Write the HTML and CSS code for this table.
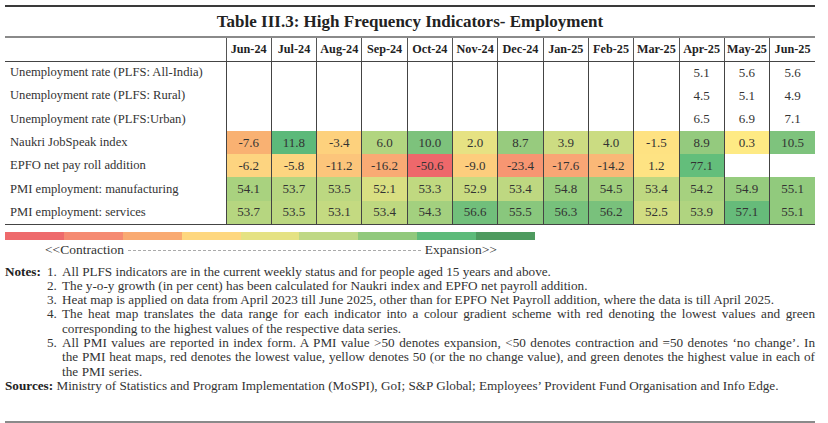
FILE: index.html
```html
<!DOCTYPE html>
<html lang="en">
<head>
<meta charset="utf-8">
<title>Table III.3: High Frequency Indicators- Employment</title>
<link rel="stylesheet" href="styles.css">
</head>
<body>
<div class="page">
  <div class="rule rule-top"></div>
  <h1 class="title">Table III.3: High Frequency Indicators- Employment</h1>
  <table class="hf">
    <colgroup>
      <col class="c-label">
      <col class="c-m"><col class="c-m"><col class="c-m"><col class="c-m"><col class="c-m"><col class="c-m"><col class="c-m"><col class="c-m"><col class="c-m"><col class="c-m"><col class="c-m"><col class="c-m"><col class="c-m">
    </colgroup>
    <thead>
      <tr><th></th><th>Jun-24</th><th>Jul-24</th><th>Aug-24</th><th>Sep-24</th><th>Oct-24</th><th>Nov-24</th><th>Dec-24</th><th>Jan-25</th><th>Feb-25</th><th>Mar-25</th><th>Apr-25</th><th>May-25</th><th>Jun-25</th></tr>
    </thead>
    <tbody>
      <tr><td>Unemployment rate (PLFS: All-India)</td><td></td><td></td><td></td><td></td><td></td><td></td><td></td><td></td><td></td><td></td><td>5.1</td><td>5.6</td><td>5.6</td></tr>
      <tr><td>Unemployment rate (PLFS: Rural)</td><td></td><td></td><td></td><td></td><td></td><td></td><td></td><td></td><td></td><td></td><td>4.5</td><td>5.1</td><td>4.9</td></tr>
      <tr><td>Unemployment rate (PLFS:Urban)</td><td></td><td></td><td></td><td></td><td></td><td></td><td></td><td></td><td></td><td></td><td>6.5</td><td>6.9</td><td>7.1</td></tr>
      <tr><td>Naukri JobSpeak index</td>
        <td style="background:#f9b172">-7.6</td><td style="background:#5cb97a">11.8</td><td style="background:#fdd17d">-3.4</td><td style="background:#b2d580">6.0</td><td style="background:#7dc27c">10.0</td><td style="background:#e6e283">2.0</td><td style="background:#97cb7e">8.7</td><td style="background:#cddc82">3.9</td><td style="background:#cbdc82">4.0</td><td style="background:#fee282">-1.5</td><td style="background:#94ca7e">8.9</td><td style="background:#feea84">0.3</td><td style="background:#7ec37d">10.5</td></tr>
      <tr><td>EPFO net pay roll addition</td>
        <td style="background:#fdd480">-6.2</td><td style="background:#fdd580">-5.8</td><td style="background:#fcc57b">-11.2</td><td style="background:#f9aa74">-16.2</td><td style="background:#ee686b">-50.6</td><td style="background:#fdcd7d">-9.0</td><td style="background:#f79672">-23.4</td><td style="background:#f9a675">-17.6</td><td style="background:#fab877">-14.2</td><td style="background:#fee383">1.2</td><td style="background:#63be7b">77.1</td><td></td><td></td></tr>
      <tr><td>PMI employment: manufacturing</td>
        <td style="background:#a9d27f">54.1</td><td style="background:#b6d680">53.7</td><td style="background:#bcd881">53.5</td><td style="background:#d9df82">52.1</td><td style="background:#c0d980">53.3</td><td style="background:#c9db81">52.9</td><td style="background:#bed881">53.4</td><td style="background:#99cd7e">54.8</td><td style="background:#a0cf7e">54.5</td><td style="background:#bed881">53.4</td><td style="background:#a6d17f">54.2</td><td style="background:#96cc7e">54.9</td><td style="background:#91ca7d">55.1</td></tr>
      <tr><td>PMI employment: services</td>
        <td style="background:#b6d680">53.7</td><td style="background:#bbd780">53.5</td><td style="background:#c4da81">53.1</td><td style="background:#bed880">53.4</td><td style="background:#a3d07f">54.3</td><td style="background:#71bf7b">56.6</td><td style="background:#89c77d">55.5</td><td style="background:#77c17c">56.3</td><td style="background:#79c17c">56.2</td><td style="background:#d1dd82">52.5</td><td style="background:#b0d480">53.9</td><td style="background:#66bb7a">57.1</td><td style="background:#91ca7d">55.1</td></tr>
    </tbody>
  </table>

  <div class="legend-bar">
    <span class="seg s1"></span><span class="seg s2"></span><span class="seg s3"></span><span class="seg s4"></span><span class="seg s5"></span><span class="seg s6"></span><span class="seg s7"></span><span class="seg s8"></span><span class="seg s9"></span>
  </div>
  <div class="legend-text">
    <span>&lt;&lt;Contraction</span><span class="dash"></span><span>Expansion&gt;&gt;</span>
  </div>

  <div class="notes">
    <div class="notes-label">Notes:</div>
    <ol class="notes-list">
      <li><span class="num">1.</span><span class="txt">All PLFS indicators are in the current weekly status and for people aged 15 years and above.</span></li>
      <li><span class="num">2.</span><span class="txt">The y-o-y growth (in per cent) has been calculated for Naukri index and EPFO net payroll addition.</span></li>
      <li><span class="num">3.</span><span class="txt">Heat map is applied on data from April 2023 till June 2025, other than for EPFO Net Payroll addition, where the data is till April 2025.</span></li>
      <li><span class="num">4.</span><span class="txt just">The heat map translates the data range for each indicator into a colour gradient scheme with red denoting the lowest values and green corresponding to the highest values of the respective data series.</span></li>
      <li><span class="num">5.</span><span class="txt just tight">All PMI values are reported in index form. A PMI value &gt;50 denotes expansion, &lt;50 denotes contraction and =50 denotes ‘no change’. In the PMI heat maps, red denotes the lowest value, yellow denotes 50 (or the no change value), and green denotes the highest value in each of the PMI series.</span></li>
    </ol>
  </div>
  <p class="sources"><span class="src-label">Sources:</span> Ministry of Statistics and Program Implementation (MoSPI), GoI; S&amp;P Global; Employees’ Provident Fund Organisation and Info Edge.</p>
  <div class="rule rule-bottom"></div>
</div>
</body>
</html>
```

FILE: styles.css
```css
* { box-sizing: border-box; }
html, body { margin: 0; padding: 0; background: #fff; }
body {
  font-family: "Liberation Serif", "Times New Roman", serif;
  color: #2e2e2e;
}
.page {
  width: 810px;
  margin-left: 5px;
  padding-top: 5px;
}
.rule { height: 2px; background: #3a3a3a; }
.rule-bottom { background: #8a8a8a; margin-top: 28px; }
.title {
  margin: 5px 0 4px;
  font-size: 17px;
  line-height: 20px;
  font-weight: bold;
  text-align: center;
  color: #222;
}
.hf {
  width: 810px;
  table-layout: fixed;
  border-collapse: collapse;
  font-size: 13px;
}
.c-label { width: 221px; }
.c-m { width: 45.3px; }
.hf th {
  height: 24px;
  padding: 0;
  font-weight: bold;
  font-size: 12.2px;
  text-align: center;
  color: #222;
  border-top: 2px solid #8a8a8a;
  border-bottom: 1px solid #444;
  border-left: 1px solid #555;
}
.hf th:first-child { border-left: none; }
.hf td {
  height: 23.3px;
  padding: 0;
  text-align: center;
  color: #333;
  border-left: 1px solid #444;
}
.hf td:first-child {
  border-left: none;
  text-align: left;
  padding-left: 5px;
  font-size: 12.6px;
  white-space: nowrap;
}
.hf tbody tr:last-child td { border-bottom: 1px solid #444; }

.legend-bar {
  display: flex;
  width: 530px;
  height: 8px;
  margin-top: 7px;
}
.seg { flex: 1; }
.s1 { background: #ee6a6c; }
.s2 { background: #f58a72; }
.s3 { background: #f9aa72; }
.s4 { background: #fed77f; }
.s5 { background: #e5e283; }
.s6 { background: #bfd885; }
.s7 { background: #91c97c; }
.s8 { background: #5dbb7a; }
.s9 { background: #4e9a5f; }

.legend-text {
  display: flex;
  align-items: center;
  width: 452px;
  margin-left: 40px;
  margin-top: 3px;
  font-size: 13.5px;
  line-height: 14px;
  color: #333;
}
.dash {
  flex: 1;
  margin: 2px 4px 0;
  border-top: 1px dashed #aaa;
}

.notes {
  display: grid;
  grid-template-columns: 41px 1fr;
  margin-top: 8px;
  font-size: 13.2px;
  line-height: 14.3px;
  color: #333;
}
.notes-label { font-weight: bold; color: #222; }
.notes-list { list-style: none; margin: 0; padding: 0; }
.notes-list li { display: grid; grid-template-columns: 16px 1fr; }
.num { padding-left: 1px; }
.just { text-align: justify; }
.tight { word-spacing: 0.35px; }
.sources {
  margin: 0;
  font-size: 13.2px;
  line-height: 14.3px;
  color: #333;
}
.src-label { font-weight: bold; color: #222; }
```
